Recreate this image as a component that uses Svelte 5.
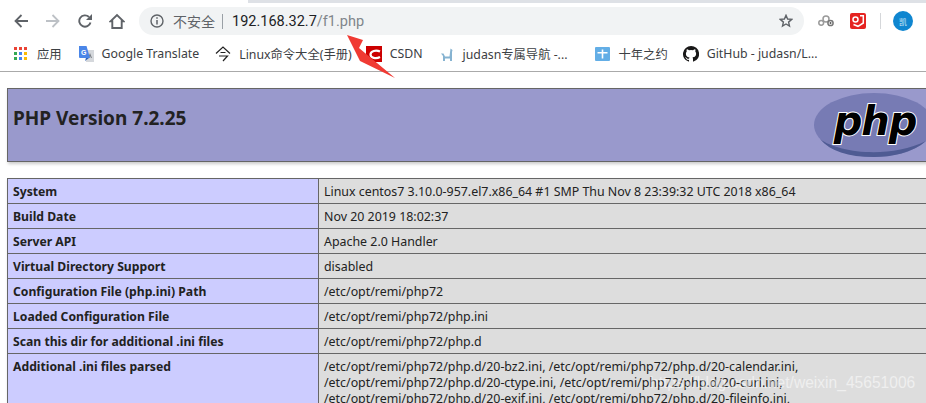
<script lang="ts">
  const bookmarks = [
    { label: "应用", icon: "apps" },
    { label: "Google Translate", icon: "translate" },
    { label: "Linux命令大全(手册)", icon: "linux" },
    { label: "CSDN", icon: "csdn" },
    { label: "judasn专属导航 -...", icon: "cat" },
    { label: "十年之约", icon: "plus" },
    { label: "GitHub - judasn/L...", icon: "github" }
  ];

  const rows = [
    ["System", "Linux centos7 3.10.0-957.el7.x86_64 #1 SMP Thu Nov 8 23:39:32 UTC 2018 x86_64"],
    ["Build Date", "Nov 20 2019 18:02:37"],
    ["Server API", "Apache 2.0 Handler"],
    ["Virtual Directory Support", "disabled"],
    ["Configuration File (php.ini) Path", "/etc/opt/remi/php72"],
    ["Loaded Configuration File", "/etc/opt/remi/php72/php.ini"],
    ["Scan this dir for additional .ini files", "/etc/opt/remi/php72/php.d"],
    [
      "Additional .ini files parsed",
      "/etc/opt/remi/php72/php.d/20-bz2.ini, /etc/opt/remi/php72/php.d/20-calendar.ini, /etc/opt/remi/php72/php.d/20-ctype.ini, /etc/opt/remi/php72/php.d/20-curl.ini, /etc/opt/remi/php72/php.d/20-exif.ini, /etc/opt/remi/php72/php.d/20-fileinfo.ini,"
    ]
  ];

  const appColors = ["#ea4335", "#ea4335", "#ea4335", "#34a853", "#4285f4", "#fbbc05", "#34a853", "#4285f4", "#fbbc05"];
</script>

<div class="window">
  <div class="tabstrip"><div class="tab"></div></div>

  <div class="toolbar">
    <div class="nav">
      <svg class="btn" viewBox="0 0 14 14"><path d="M14 7H1.500M7.500 1 1.500 7l6 6" fill="none" stroke="#5f6368" stroke-width="1.800" /></svg>
      <svg class="btn" viewBox="0 0 14 14"><path d="M0 7h12.500M6.500 1l6 6-6 6" fill="none" stroke="#bdc1c6" stroke-width="1.800" /></svg>
      <svg class="btn" viewBox="0 0 14 14"><path d="M12.500 8.500A5.700 5.700 0 1 1 11 3" fill="none" stroke="#5f6368" stroke-width="1.900" /><path d="M14 0v6H8z" fill="#5f6368" /></svg>
      <svg class="home" viewBox="0 0 16 16"><path d="M3.300 15V8.300H1.500L8 2l6.500 6.300h-1.800V15z" fill="none" stroke="#5f6368" stroke-width="1.900" /></svg>
    </div>
    <div class="omnibox">
      <svg class="info" viewBox="0 0 14 14"><circle cx="7" cy="7" r="6" fill="none" stroke="#5f6368" stroke-width="1.400" /><path d="M7 6v4.500M7 3.300v1.500" stroke="#5f6368" stroke-width="1.500" /></svg>
      <span class="insecure">不安全</span>
      <span class="divider"></span>
      <span class="url">192.168.32.7<span class="path">/f1.php</span></span>
      <svg class="star" viewBox="0 0 14 14"><path d="M7 1.300 8.600 5l4.100.4-3.100 2.700.9 4L7 10 3.500 12.100l.9-4L1.300 5.400 5.400 5z" fill="none" stroke="#5f6368" stroke-width="1.400" /></svg>
    </div>
    <div class="extensions">
      <svg class="ext-cloud" viewBox="0 0 16 12"><g fill="none" stroke="#9a9a9a" stroke-width="1.500"><circle cx="3.200" cy="7.800" r="2.400" /><circle cx="8" cy="4" r="3" /><circle cx="12.500" cy="8" r="2.600" stroke="#777" /></g><circle cx="12.500" cy="8" r="1" fill="#555" /></svg>
      <svg class="ext-red" viewBox="0 0 16 16"><rect width="16" height="16" rx="2" fill="#e52421" /><path d="M3 6.500a2.500 2.500 0 1 1 5 0 2.500 2.500 0 0 1-5 0zM10 2.800h3.300v7.200L8 13.300 3.500 11.500" fill="none" stroke="#fff" stroke-width="1.500" /></svg>
      <span class="ext-sep"></span>
      <div class="avatar">凯</div>
    </div>
  </div>

  <div class="bookmarks">
    {#each bookmarks as b}
      <div class="bookmark {b.icon}">
        {#if b.icon === "apps"}
          <div class="apps-grid">
            {#each appColors as c}<i style="background:{c}"></i>{/each}
          </div>
        {:else if b.icon === "translate"}
          <svg viewBox="0 0 16 16"><path d="M7 4h9v12H8z" fill="#d5d8dc" /><path d="M12 7l2 5h-1l-1-2-1 2h-1z" fill="#7a7f85" /><path d="M1 0h7.500L12 12H2a1 1 0 0 1-1-1z" fill="#4a86e8" /><path d="M8 12l-1 3 4-3z" fill="#2f62b5" /><text x="3" y="8.500" class="mini">G</text></svg>
        {:else if b.icon === "linux"}
          <svg viewBox="0 0 16 16"><path d="M1 7.500 8 1l7 6.500M5.500 6.500h5M4 10h8.500L8 15" fill="none" stroke="#222" stroke-width="1.200" /></svg>
        {:else if b.icon === "csdn"}
          <svg viewBox="0 0 16 16"><rect width="16" height="16" fill="#c00" /><path d="M14 5.500C10 3.500 4.500 5 4.500 8.500S10 13 14 11" fill="none" stroke="#fff" stroke-width="2.200" /></svg>
        {:else if b.icon === "cat"}
          <svg viewBox="0 0 16 16"><path d="M2 7.500h2.500l1.500 3h4.500l1-8 2 1.500-.5 2V15h-2v-2.500H6V15H4V10z" fill="#86b3d1" /></svg>
        {:else if b.icon === "plus"}
          <svg viewBox="0 0 16 16"><rect y="1" width="15" height="14" rx="1" fill="#63aee6" /><path d="M7.500 3.500v9M2.500 6.800h10" stroke="#fff" stroke-width="1.600" /></svg>
        {:else if b.icon === "github"}
          <svg viewBox="0 0 16 16"><path fill="#181717" d="M8 0a8 8 0 0 0-2.530 15.590c.4.070.55-.17.55-.38v-1.340c-2.230.48-2.700-1.070-2.700-1.070-.36-.93-.89-1.170-.89-1.170-.73-.5.050-.49.050-.49.800.060 1.230.830 1.230.830.710 1.220 1.870.870 2.330.660.070-.520.280-.870.510-1.070-1.780-.2-3.640-.89-3.640-3.950 0-.870.310-1.590.820-2.150-.080-.2-.360-1.020.080-2.120 0 0 .670-.210 2.200.820a7.600 7.600 0 0 1 4 0c1.530-1.040 2.200-.820 2.200-.820.440 1.100.160 1.920.080 2.120.510.560.820 1.270.820 2.150 0 3.070-1.870 3.750-3.650 3.950.290.250.540.730.540 1.480v2.200c0 .210.150.460.550.380A8 8 0 0 0 8 0z" /></svg>
        {/if}
        <span>{b.label}</span>
      </div>
    {/each}
  </div>

  <main class="page">
    <header class="php-head">
      <h1>PHP Version 7.2.25</h1>
      <svg class="logo" viewBox="0 0 120 64">
        <ellipse cx="60" cy="32" rx="60" ry="32" fill="#777bb4" />
        <path d="M6 46C24 60 76 66 112 48 98 60 78 64 60 64 34 64 16 58 6 46z" fill="#4f5b93" />
        <text x="61" y="42" class="logo-text">php</text>
      </svg>
    </header>

    <table>
      <tbody>
        {#each rows as [key, value]}
          <tr>
            <td class="k">{key}</td>
            <td class="v">{value}</td>
          </tr>
        {/each}
      </tbody>
    </table>
  </main>

  <div class="watermark">https://blog.csdn.net/weixin_45651006</div>

  <svg class="arrow" viewBox="0 0 52 46"><path d="M2 1 18 6 14 14 50 44 15 27 11 19z" fill="#f03a33" /></svg>
</div>

<style>
  :global(body) {
    margin: 0;
    background: #fff;
  }

  .window {
    position: relative;
    width: 926px;
    height: 403px;
    overflow: hidden;
    font-family: "Noto Sans", "Noto Sans CJK SC", sans-serif;
    background: #fff;
  }

  .tabstrip {
    height: 3px;
    background: #dee1e6;
  }

  .tab {
    width: 248px;
    height: 3px;
    background: #fff;
  }

  .toolbar {
    display: flex;
    align-items: center;
    height: 36px;
  }

  .nav {
    display: flex;
    align-items: center;
    padding: 0 14px;
  }

  .btn {
    width: 14px;
    height: 14px;
    margin-right: 18px;
  }

  .btn:nth-child(3) {
    margin-right: 17px;
  }

  .home {
    width: 16px;
    height: 16px;
  }

  .omnibox {
    display: flex;
    align-items: center;
    flex: 1;
    height: 28px;
    margin-right: 14px;
    padding: 0 11px;
    border-radius: 14px;
    background: #f1f3f4;
  }

  .info {
    width: 14px;
    height: 14px;
  }

  .insecure {
    margin-left: 9px;
    font-size: 14px;
    color: #5f6368;
  }

  .divider {
    width: 1px;
    height: 15px;
    margin: 0 9px 0 7px;
    background: #9aa0a6;
  }

  .url {
    font-family: Roboto, sans-serif;
    font-size: 14.500px;
    color: #202124;
  }

  .path {
    color: #80868b;
  }

  .star {
    width: 14px;
    height: 14px;
    margin-left: auto;
  }

  .extensions {
    display: flex;
    align-items: center;
    padding-right: 13px;
  }

  .ext-cloud {
    width: 16px;
    height: 12px;
  }

  .ext-red {
    width: 16px;
    height: 16px;
    margin-left: 16px;
  }

  .ext-sep {
    width: 1px;
    height: 16px;
    margin: 0 12px 0 14px;
    background: #d5d7da;
  }

  .avatar {
    display: grid;
    place-items: center;
    width: 20px;
    height: 20px;
    border-radius: 50%;
    background: #0f86d0;
    color: #cfe6f6;
    font-size: 8px;
  }

  .bookmarks {
    display: flex;
    align-items: center;
    box-sizing: border-box;
    height: 33px;
    padding: 0 0 3px 13px;
    border-bottom: 1px solid #aaa;
    font-size: 12.300px;
    color: #3c4043;
    white-space: nowrap;
  }

  .bookmark {
    display: flex;
    align-items: center;
    gap: 8px;
    margin-right: 16px;
  }

  .bookmark.linux {
    margin-right: 14px;
  }

  .bookmark.cat {
    margin-right: 27px;
  }

  .bookmark.plus {
    margin-right: 15px;
  }

  .bookmark svg {
    width: 16px;
    height: 16px;
    flex: none;
  }

  .apps-grid {
    display: grid;
    grid-template-columns: repeat(3, 3px);
    gap: 2px;
    width: 13px;
    padding-left: 1px;
    margin-right: 2px;
  }

  .apps-grid i {
    height: 3px;
  }

  .mini {
    font: bold 7px "Liberation Sans", sans-serif;
    fill: #fff;
  }

  .page {
    padding: 16px 0 0 7px;
    width: 934px;
    color: #222;
    font-size: 12.400px;
  }

  .php-head {
    position: relative;
    box-sizing: border-box;
    height: 74px;
    padding: 17px 5px;
    border: 1px solid #666;
    background: #9999cc;
    box-shadow: 1px 2px 3px #ccc;
  }

  h1 {
    margin: 0;
    font-size: 19px;
    line-height: 24px;
    font-weight: 700;
  }

  .logo {
    position: absolute;
    left: 806px;
    top: 4px;
    width: 120px;
    height: 64px;
  }

  .logo-text {
    font: italic 700 40px "DejaVu Sans", sans-serif;
    letter-spacing: -1px;
    text-anchor: middle;
    fill: #000;
    stroke: #fff;
    stroke-width: 2px;
    paint-order: stroke;
  }

  table {
    box-sizing: border-box;
    width: 934px;
    margin-top: 16px;
    border-collapse: collapse;
    table-layout: fixed;
    box-shadow: 1px 2px 3px #ccc;
  }

  td {
    box-sizing: border-box;
    height: 25px;
    padding: 5px 5px 3px;
    border: 1px solid #666;
    vertical-align: top;
    line-height: 16px;
  }

  .k {
    width: 311px;
    background: #ccccff;
    font-size: 12.200px;
    font-weight: 700;
  }

  .v {
    background: #dddddd;
  }

  .watermark {
    position: absolute;
    left: 650px;
    top: 374px;
    font-family: "Liberation Sans", sans-serif;
    font-size: 15.600px;
    color: rgba(255, 255, 255, 0.55);
    white-space: nowrap;
  }

  .arrow {
    position: absolute;
    left: 345px;
    top: 34px;
    width: 52px;
    height: 46px;
  }
</style>
